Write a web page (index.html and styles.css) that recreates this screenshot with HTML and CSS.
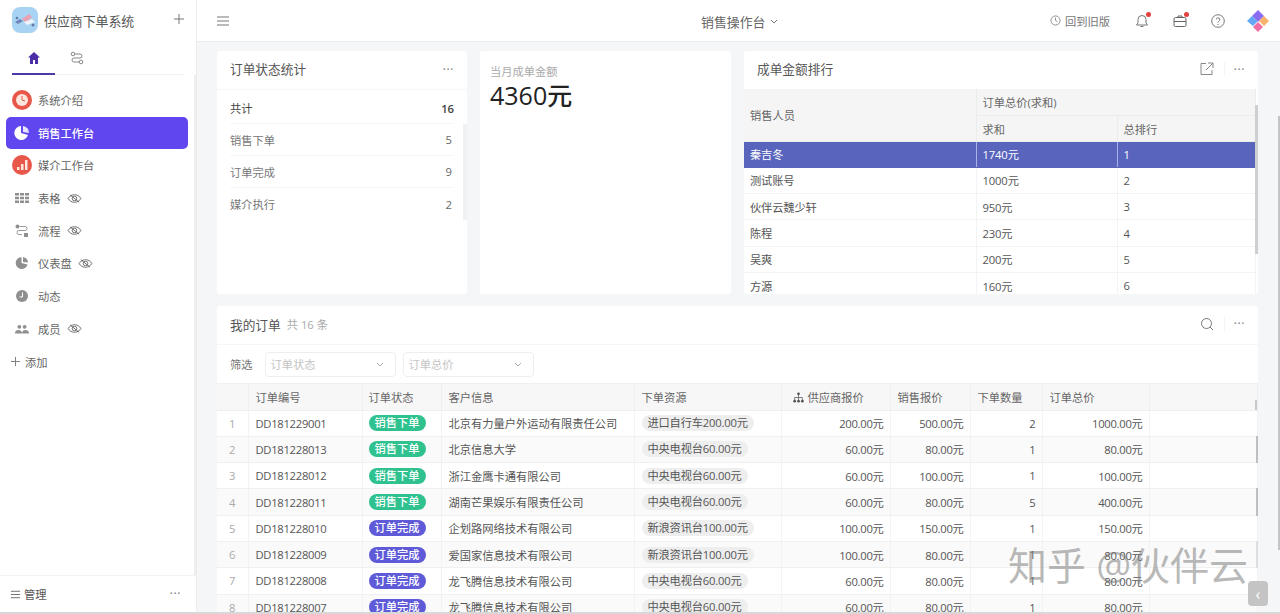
FILE: index.html
```html
<!DOCTYPE html>
<html lang="zh">
<head>
<meta charset="utf-8">
<title>供应商下单系统</title>
<link rel="stylesheet" href="styles.css">
</head>
<body>
<div class="app">
  <aside class="side">
    <div class="brand">
      <svg class="logo" viewBox="0 0 26 26"><rect width="26" height="26" rx="8" fill="#a9d3f2"/><path d="M3 15l5-3 3 2-5 3z" fill="#6f87b8"/><path d="M10 12l7-5 3 3-6 6z" fill="#e8a3b4"/><path d="M12 15l8-3 3 3-8 3z" fill="#eef3fb"/><circle cx="5" cy="11" r="1.3" fill="#5f79a8"/><circle cx="21" cy="18" r="1.5" fill="#5f79a8"/></svg>
      <span class="brand-name">供应商下单系统</span>
      <svg class="plus" viewBox="0 0 12 12"><path d="M6 1v10M1 6h10" stroke="#777" fill="none"/></svg>
    </div>
    <div class="tabs">
      <div class="tab tab-on"><svg class="i14" viewBox="0 0 14 14"><path d="M7 1L1 6.500h2V13h3V9h2v4h3V6.500h2z" fill="#4b2ea5"/></svg></div>
      <div class="tab"><svg class="i14" viewBox="0 0 14 14" fill="none" stroke="#888"><circle cx="3" cy="3" r="1.8"/><circle cx="11" cy="11" r="1.8"/><path d="M5 3h5a2 2 0 0 1 0 4H4a2 2 0 0 0 0 4h5"/></svg></div>
    </div>
    <nav class="nav">
      <a class="item"><svg class="i20" viewBox="0 0 20 20"><circle cx="10" cy="10" r="10" fill="#e8584a"/><circle cx="10" cy="10" r="6" fill="#fbe5dc"/><path d="M10 6v4l3 1" stroke="#e8584a" fill="none"/></svg><span>系统介绍</span></a>
      <a class="item item-on"><svg class="i20" viewBox="0 0 20 20"><path d="M9 3a7 7 0 1 0 7 9l-7-2z" fill="#fff"/><path d="M11 3a7 7 0 0 1 6 7l-6-1z" fill="#fff" opacity=".85"/></svg><span>销售工作台</span></a>
      <a class="item"><svg class="i20" viewBox="0 0 20 20"><circle cx="10" cy="10" r="10" fill="#e8584a"/><path d="M5 12h2.500v3H5zM9 9h2.500v6H9zM13 5h2.500v10H13z" fill="#fce7dc"/></svg><span>媒介工作台</span></a>
      <a class="item"><svg class="i20 sm" viewBox="0 0 14 14"><path d="M0 2h4v2.500H0zM5 2h4v2.500H5zM10 2h4v2.500h-4zM0 5.800h4v2.500H0zM5 5.800h4v2.500H5zM10 5.800h4v2.500h-4zM0 9.500h4V12H0zM5 9.500h4V12H5zM10 9.500h4V12h-4z" fill="#8f8f8f"/></svg><span>表格</span><svg class="eye" viewBox="0 0 16 12"><path d="M1 6c3-5.500 11-5.500 14 0-3 5.500-11 5.500-14 0z" fill="none" stroke="#666"/><circle cx="8" cy="6" r="2.500" fill="none" stroke="#666"/><path d="M3 2l10 8" stroke="#666"/></svg></a>
      <a class="item"><svg class="i20 sm" viewBox="0 0 14 14"><circle cx="2.500" cy="2.500" r="2" fill="#8f8f8f"/><rect x="9" y="9" width="4" height="4" fill="#8f8f8f"/><path d="M5 2.500h5a2 2 0 0 1 0 4H4a2 2 0 0 0 0 4h3" fill="none" stroke="#999"/></svg><span>流程</span><svg class="eye" viewBox="0 0 16 12"><path d="M1 6c3-5.500 11-5.500 14 0-3 5.500-11 5.500-14 0z" fill="none" stroke="#666"/><circle cx="8" cy="6" r="2.500" fill="none" stroke="#666"/><path d="M3 2l10 8" stroke="#666"/></svg></a>
      <a class="item"><svg class="i20 sm" viewBox="0 0 14 14"><path d="M6.500 1a6 6 0 1 0 6 7.500L6.500 7z" fill="#8f8f8f"/><path d="M8 1a6 6 0 0 1 5 5.500L8 6z" fill="#8f8f8f"/></svg><span>仪表盘</span><svg class="eye" viewBox="0 0 16 12"><path d="M1 6c3-5.500 11-5.500 14 0-3 5.500-11 5.500-14 0z" fill="none" stroke="#666"/><circle cx="8" cy="6" r="2.500" fill="none" stroke="#666"/><path d="M3 2l10 8" stroke="#666"/></svg></a>
      <a class="item"><svg class="i20 sm" viewBox="0 0 14 14"><circle cx="7" cy="7" r="6" fill="#8f8f8f"/><path d="M7.500 3.500V8H4.500" stroke="#fff" fill="none"/></svg><span>动态</span></a>
      <a class="item"><svg class="i20 sm" viewBox="0 0 16 14"><circle cx="5" cy="4.500" r="2.200" fill="#8f8f8f"/><circle cx="11" cy="4.500" r="2.200" fill="#8f8f8f"/><path d="M0 12c0-5 8-5 8 0zM8 12c0-5 8-5 8 0z" fill="#8f8f8f"/></svg><span>成员</span><svg class="eye" viewBox="0 0 16 12"><path d="M1 6c3-5.500 11-5.500 14 0-3 5.500-11 5.500-14 0z" fill="none" stroke="#666"/><circle cx="8" cy="6" r="2.500" fill="none" stroke="#666"/><path d="M3 2l10 8" stroke="#666"/></svg></a>
      <a class="add"><svg class="i11" viewBox="0 0 12 12"><path d="M6 1v10M1 6h10" stroke="#777" fill="none"/></svg><span>添加</span></a>
    </nav>
    <div class="manage">
      <svg class="i11" viewBox="0 0 12 12"><path d="M1 2.500h10M1 6h10M1 9.500h10" stroke="#666" fill="none"/></svg>
      <span class="manage-name">管理</span>
      <span class="dots">···</span>
    </div>
  </aside>
  <div class="right">
    <header class="top">
      <svg class="burger" viewBox="0 0 12 10"><path d="M0 1h12M0 5h12M0 9h12" stroke="#777" fill="none"/></svg>
      <div class="top-title"><span>销售操作台</span><svg class="chev" viewBox="0 0 8 5"><path d="M1 1l3 3 3-3" stroke="#777" fill="none"/></svg></div>
      <div class="top-tools">
        <div class="old"><svg class="i11" viewBox="0 0 12 12"><circle cx="6" cy="6" r="5" fill="none" stroke="#888"/><path d="M6 3v3l2 1" fill="none" stroke="#888"/></svg><span>回到旧版</span></div>
        <div class="tool t-bell"><svg viewBox="0 0 14 14"><path d="M7 1.500a4 4 0 0 0-4 4V9L1.500 11h11L11 9V5.500a4 4 0 0 0-4-4zM5.500 12.500h3" fill="none" stroke="#777"/></svg><i class="dot"></i></div>
        <div class="tool t-case"><svg viewBox="0 0 14 14"><rect x="1" y="3.500" width="12" height="9" rx="1.500" fill="none" stroke="#666"/><path d="M1 7.500h12M5 3.500V2h4v1.500" fill="none" stroke="#666"/></svg><i class="dot"></i></div>
        <div class="tool t-help"><svg viewBox="0 0 14 14"><circle cx="7" cy="7" r="6.300" fill="none" stroke="#777"/><path d="M5.200 5.500a1.800 1.800 0 1 1 2.600 1.700c-.6.400-.8.700-.8 1.300M7 10v1" fill="none" stroke="#777"/></svg></div>
        <svg class="wheel" viewBox="0 0 22 22"><path d="M11 0l6 6-6 6-6-6z" fill="#8a6cf0"/><path d="M5 6l5.500 5.500L6 16 0 11z" fill="#62a8f5"/><path d="M17 6l5 5-5 5-5-5z" fill="#f9b26b"/><path d="M11 12l5 5-5 5-5-5z" fill="#ef6fa5"/></svg>
      </div>
    </header>
    <main class="main">
      <div class="cards">
        <section class="card">
          <div class="card-head"><h2>订单状态统计</h2><span class="dots">···</span></div>
          <div class="stat-list">
            <div class="stat stat-sum"><span>共计</span><b>16</b></div>
            <div class="stat"><span>销售下单</span><b>5</b></div>
            <div class="stat"><span>订单完成</span><b>9</b></div>
            <div class="stat"><span>媒介执行</span><b>2</b></div>
          </div>
          <i class="thumb"></i>
        </section>
        <section class="card money">
          <div class="money-label">当月成单金额</div>
          <div class="money-value">4360元</div>
        </section>
        <section class="card rank">
          <div class="card-head rank-head"><h2>成单金额排行</h2>
            <svg class="i14 ext" viewBox="0 0 14 14"><path d="M6 1.500H1v11h11V8M8 1h5v5M13 1L6 8" fill="none" stroke="#888"/></svg>
            <span class="sep"></span><span class="dots">···</span></div>
          <div class="rank-wrap">
            <table class="rank-table">
              <colgroup><col class="rc1"><col class="rc2"><col class="rc3"></colgroup>
              <thead>
                <tr><th rowspan="2">销售人员</th><th colspan="2">订单总价(求和)</th></tr>
                <tr><th>求和</th><th>总排行</th></tr>
              </thead>
              <tbody>
                <tr class="sel"><td>秦吉冬</td><td>1740元</td><td>1</td></tr>
                <tr><td>测试账号</td><td>1000元</td><td>2</td></tr>
                <tr><td>伙伴云魏少轩</td><td>950元</td><td>3</td></tr>
                <tr><td>陈程</td><td>230元</td><td>4</td></tr>
                <tr><td>吴爽</td><td>200元</td><td>5</td></tr>
                <tr><td>方源</td><td>160元</td><td>6</td></tr>
              </tbody>
            </table>
            <i class="rank-bar"></i>
          </div>
        </section>
      </div>
      <section class="card orders">
        <div class="card-head orders-head"><h2>我的订单</h2><span class="count">共 16 条</span>
          <svg class="i14 search" viewBox="0 0 14 14"><circle cx="6.500" cy="6.500" r="5" fill="none" stroke="#777"/><path d="M10 10l3 3" stroke="#777"/></svg>
          <span class="sep"></span><span class="dots">···</span></div>
        <div class="filters">
          <span class="f-label">筛选</span>
          <div class="select s1"><span>订单状态</span><svg class="chev" viewBox="0 0 8 5"><path d="M1 1l3 3 3-3" stroke="#aaa" fill="none"/></svg></div>
          <div class="select s2"><span>订单总价</span><svg class="chev" viewBox="0 0 8 5"><path d="M1 1l3 3 3-3" stroke="#aaa" fill="none"/></svg></div>
        </div>
        <table class="grid">
          <colgroup><col class="g0"><col class="g1"><col class="g2"><col class="g3"><col class="g4"><col class="g5"><col class="g6"><col class="g7"><col class="g8"><col></colgroup>
          <thead><tr><th></th><th>订单编号</th><th class="status">订单状态</th><th>客户信息</th><th>下单资源</th><th class="supply"><svg class="i11" viewBox="0 0 12 12"><circle cx="6" cy="2" r="1.500" fill="#555"/><circle cx="1.800" cy="10" r="1.500" fill="#555"/><circle cx="6" cy="10" r="1.500" fill="#555"/><circle cx="10.200" cy="10" r="1.500" fill="#555"/><path d="M6 3v6M1.800 9V6h8.400v3" fill="none" stroke="#555" stroke-width=".8"/></svg>供应商报价</th><th>销售报价</th><th>下单数量</th><th>订单总价</th><th class="edge-head"></th></tr></thead>
          <tbody>
            <tr><td class="idx">1</td><td class="code">DD181229001</td><td class="status"><span class="pill green">销售下单</span></td><td>北京有力量户外运动有限责任公司</td><td><span class="chip">进口自行车200.00元</span></td><td class="num">200.00元</td><td class="num">500.00元</td><td class="num">2</td><td class="num">1000.00元</td><td></td></tr>
            <tr><td class="idx">2</td><td class="code">DD181228013</td><td class="status"><span class="pill green">销售下单</span></td><td>北京信息大学</td><td><span class="chip">中央电视台60.00元</span></td><td class="num">60.00元</td><td class="num">80.00元</td><td class="num">1</td><td class="num">80.00元</td><td class="edge"></td></tr>
            <tr><td class="idx">3</td><td class="code">DD181228012</td><td class="status"><span class="pill green">销售下单</span></td><td>浙江金鹰卡通有限公司</td><td><span class="chip">中央电视台60.00元</span></td><td class="num">60.00元</td><td class="num">100.00元</td><td class="num">1</td><td class="num">100.00元</td><td></td></tr>
            <tr><td class="idx">4</td><td class="code">DD181228011</td><td class="status"><span class="pill green">销售下单</span></td><td>湖南芒果娱乐有限责任公司</td><td><span class="chip">中央电视台60.00元</span></td><td class="num">60.00元</td><td class="num">80.00元</td><td class="num">5</td><td class="num">400.00元</td><td class="edge"></td></tr>
            <tr><td class="idx">5</td><td class="code">DD181228010</td><td class="status"><span class="pill purple">订单完成</span></td><td>企划路网络技术有限公司</td><td><span class="chip">新浪资讯台100.00元</span></td><td class="num">100.00元</td><td class="num">150.00元</td><td class="num">1</td><td class="num">150.00元</td><td></td></tr>
            <tr><td class="idx">6</td><td class="code">DD181228009</td><td class="status"><span class="pill purple">订单完成</span></td><td>爱国家信息技术有限公司</td><td><span class="chip">新浪资讯台100.00元</span></td><td class="num">100.00元</td><td class="num">80.00元</td><td class="num">1</td><td class="num">80.00元</td><td class="edge-soft"></td></tr>
            <tr><td class="idx">7</td><td class="code">DD181228008</td><td class="status"><span class="pill purple">订单完成</span></td><td>龙飞腾信息技术有限公司</td><td><span class="chip">中央电视台60.00元</span></td><td class="num">60.00元</td><td class="num">80.00元</td><td class="num">1</td><td class="num">80.00元</td><td></td></tr>
            <tr><td class="idx">8</td><td class="code">DD181228007</td><td class="status"><span class="pill purple">订单完成</span></td><td>龙飞腾信息技术有限公司</td><td><span class="chip">中央电视台60.00元</span></td><td class="num">60.00元</td><td class="num">80.00元</td><td class="num">1</td><td class="num">80.00元</td><td></td></tr>
          </tbody>
        </table>
      </section>
    </main>
  </div>
</div>
<div class="watermark">知乎 @伙伴云</div>
<div class="collapse">‹</div>
</body>
</html>
```
FILE: styles.css
```css
* { box-sizing: border-box; }
html, body { margin: 0; height: 100%; overflow: hidden; }
body { font-family: "Open Sans", "Noto Sans CJK SC", sans-serif; font-size: 11.25px; color: #555; background: #d8d8d8; }
svg { display: block; flex: none; }
.app { display: flex; height: 612px; }
.side { width: 197px; flex: none; background: #fff; border-right: 1px solid #ececec; display: flex; flex-direction: column; }
.brand { display: flex; align-items: center; height: 42px; padding: 0 11px 2px 12px; }
.logo { width: 26px; height: 26px; }
.brand-name { margin-left: 6px; font-size: 12.9px; color: #555; flex: 1; }
.plus { width: 12px; height: 12px; margin-top: -2px; }
.tabs { display: flex; margin: 0 12px; height: 33px; border-bottom: 1px solid #f2f2f2; }
.tab { width: 43px; display: flex; justify-content: center; align-items: center; }
.tab-on { border-bottom: 2px solid #4b3aa8; height: 33px; }
.i14 { width: 14px; height: 14px; }
.i11 { width: 11px; height: 11px; }
.i20 { width: 20px; height: 20px; }
.i20.sm { width: 14px; height: 14px; margin: 0 3px; }
.nav { flex: 1; padding: 9px 6px 0; display: flex; flex-direction: column; border-right: 2px solid #eeeeee; }
.item { display: flex; align-items: center; height: 32px; margin-bottom: .7px; padding: 0 6px; border-radius: 5px; color: #666; gap: 6px; }
.item-on { background: #5f46ee; color: #fff; font-weight: 500; }
.eye { width: 15px; height: 11px; }
.add { display: flex; align-items: center; gap: 4px; height: 32px; padding-left: 4px; color: #666; }
.manage { display: flex; align-items: center; height: 37px; padding: 0 15px 0 10px; border-top: 1px solid #f2f2f2; color: #555; }
.manage-name { flex: 1; margin-left: 3px; }
.dots { color: #777; font-size: 12px; letter-spacing: .6px; line-height: 1; }
.right { flex: 1; min-width: 0; display: flex; flex-direction: column; background: #f5f6f8; position: relative; }
.right::after { content: ""; position: absolute; right: 0; top: 116px; width: 2px; height: 434px; background: #c4c4c6; }
.top { height: 42px; flex: none; background: #fff; border-bottom: 1px solid #ececec; display: flex; align-items: center; padding: 0 20px; position: relative; }
.burger { width: 12px; height: 10px; }
.top-title { position: absolute; left: 504px; top: 0; height: 42px; display: flex; align-items: center; gap: 5px; font-size: 12.9px; color: #666; }
.chev { width: 8px; height: 5px; }
.top-tools { margin-left: auto; display: flex; align-items: center; }
.old { display: flex; align-items: center; gap: 4px; color: #777; }
.tool { position: relative; width: 14px; height: 14px; }
.tool svg { width: 14px; height: 14px; }
.dot { position: absolute; top: -2px; right: -2px; width: 5px; height: 5px; border-radius: 50%; background: #e2403e; }
.t-bell { margin-left: 25px; }
.t-case { margin-left: 24px; }
.t-help { margin-left: 24px; }
.wheel { width: 22px; height: 22px; margin-left: 22px; margin-right: -9px; }
.main { flex: 1; overflow: hidden; padding: 9px 22px 0 20px; }
.cards { display: grid; grid-template-columns: 250px 251px 514px; column-gap: 13px; height: 243px; margin-bottom: 12px; }
.card { background: #fff; border-radius: 3px; position: relative; overflow: hidden; }
.card-head { display: flex; align-items: center; height: 39px; padding: 0 13px 2px; border-bottom: 1px solid #f6f6f6; }
.cards .card-head { padding-bottom: 4px; }
.cards .dots { margin-top: 3px; }
h2 { margin: 0; font-size: 12.7px; font-weight: 400; color: #555; flex: 1; }
.stat-list { padding: 0 13px; }
.stat { display: flex; justify-content: space-between; align-items: center; height: 32px; border-bottom: 1px solid #f6f6f6; color: #777; padding-right: 2px; }
.stat:last-child { border-bottom: 0; }
.stat b { font-weight: 400; color: #666; }
.stat-sum { height: 34px; color: #444; padding: 3px 0 0; }
.stat-sum b { font-weight: 600; color: #444; }
.thumb { position: absolute; right: 0; top: 73px; width: 4px; height: 96px; background: #f1f1f1; }
.money { padding: 13px 10px; }
.money-label { color: #aaa; line-height: 16px; }
.money-value { font-size: 25px; line-height: 30px; color: #222; font-weight: 500; }
.cards .rank-head { height: 38px; border-bottom: 0; padding-bottom: 3px; }
.ext { margin-right: 10px; }
.sep { width: 1px; height: 14px; background: #f4f4f4; margin-right: 9px; }
.rank-wrap { position: relative; height: 205px; overflow: hidden; }
.rank-table { width: 511px; table-layout: fixed; border-collapse: collapse; }
.rc1 { width: 232px; }
.rc2 { width: 141px; }
.rc3 { width: 138px; }
.rank-table th { background: #f5f5f5; font-weight: 400; text-align: left; color: #666; height: 26px; padding: 1px 6px 0; border: 1px solid #ececec; border-width: 0 1px 1px 0; }
.rank-table td { height: 26.300px; padding: 0 6px; letter-spacing: -.15px; border-bottom: 1px solid #f3f3f3; border-right: 1px solid #f3f3f3; color: #555; }
.rank-table tr.sel td { background: #5965bd; color: #fff; border-right-color: #aab2ea; border-bottom-color: #5965bd; }
.rank-bar { position: absolute; right: 0; top: 16px; width: 3px; height: 149px; background: #cfcfcf; }
.orders { height: 400px; }
.orders-head h2 { flex: none; }
.count { margin-left: 6px; color: #aaa; margin-right: auto; }
.search { margin-right: 10px; }
.filters { display: flex; align-items: center; height: 39px; padding: 0 13px; border-bottom: 1px solid #f0f0f0; }
.f-label { color: #777; margin-right: 12px; }
.select { display: flex; align-items: center; justify-content: space-between; height: 25px; border: 1px solid #eee; border-radius: 4px; padding: 0 11px 0 5px; color: #c4c4c4; }
.s1 { width: 131px; margin-right: 7px; }
.s2 { width: 131px; }
.grid { width: 100%; table-layout: fixed; border-collapse: collapse; }
.g0 { width: 31px; }
.g1 { width: 114px; }
.g2 { width: 79px; }
.g3 { width: 193px; }
.g4 { width: 147px; }
.g5 { width: 109px; }
.g6 { width: 80px; }
.g7 { width: 72px; }
.g8 { width: 107px; }
.grid th { height: 26px; background: #f7f7f7; font-weight: 400; text-align: left; color: #666; padding: 0 6px 0 7px; border-right: 1px solid #efefef; border-bottom: 1px solid #efefef; }
.grid .status { padding-left: 6px; }
.supply svg { display: inline-block; vertical-align: -1px; margin: 0 4px; }
.grid td { height: 26.300px; padding: 0 6px 0 7px; white-space: nowrap; border-right: 1px solid #f2f2f2; border-bottom: 1px solid #f0f0f0; color: #555; }
.grid tbody tr:nth-child(even) td { background: #fafafa; }
.grid .edge { border-right: 2px solid #bfbfbf; }
.grid .edge-soft { border-right: 2px solid #dedede; }
.grid .edge-head { background: #f7f7f7 linear-gradient(#c9c9c9, #c9c9c9) no-repeat right bottom / 2px 10px; }
.grid .code, .grid .num { letter-spacing: -.3px; }
.idx { text-align: center; }
.grid .idx { color: #aaa; padding: 0; }
.num { text-align: right; }
.pill { display: inline-block; height: 16px; line-height: 15px; padding: 0 6px; border-radius: 8px; color: #fff; font-weight: 500; }
.green { background: #2fc28f; }
.purple { background: #5f5ad8; }
.chip { display: inline-block; height: 16px; line-height: 16px; padding: 0 6px; border-radius: 8px; background: #eeeeee; color: #555; letter-spacing: -.2px; }
.watermark { position: absolute; left: 1008px; top: 542px; font-size: 39px; line-height: 46px; color: rgba(125,125,125,.55); white-space: nowrap; }
.collapse { position: absolute; left: 1248px; top: 581px; width: 20px; height: 25px; border-radius: 4px; background: #c4c4c4; color: #fff; display: flex; align-items: center; justify-content: center; font-size: 16px; }
```
